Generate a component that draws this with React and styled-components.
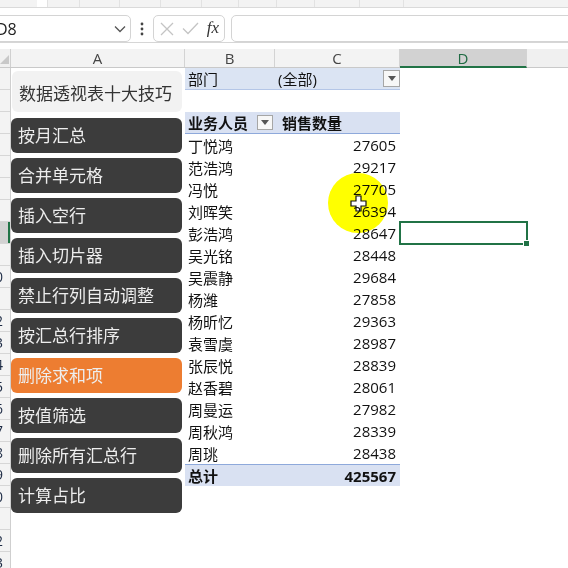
import React from "react";
import styled, { createGlobalStyle } from "styled-components";

const tips = [
  "按月汇总",
  "合并单元格",
  "插入空行",
  "插入切片器",
  "禁止行列自动调整",
  "按汇总行排序",
  "删除求和项",
  "按值筛选",
  "删除所有汇总行",
  "计算占比",
];
const activeTip = "删除求和项";

const sales = [
  ["丁悦鸿", 27605],
  ["范浩鸿", 29217],
  ["冯悦", 27705],
  ["刘晖笑", 26394],
  ["彭浩鸿", 28647],
  ["吴光铭", 28448],
  ["吴震静", 29684],
  ["杨潍", 27858],
  ["杨昕忆", 29363],
  ["袁雪虞", 28987],
  ["张辰悦", 28839],
  ["赵香碧", 28061],
  ["周曼运", 27982],
  ["周秋鸿", 28339],
  ["周珧", 28438],
];
const total = sales.reduce((s, r) => s + r[1], 0);

const ROWS = 23;
const SELECTED_ROW = 8;
const rowNums = Array.from({ length: ROWS }, (_, i) => i + 1);

const columns = [
  { key: "A", width: 174 },
  { key: "B", width: 90 },
  { key: "C", width: 125 },
  { key: "D", width: 127, selected: true },
];

function Dropdown({ small }) {
  return (
    <DropBtn $small={small}>
      <svg width="8" height="5" viewBox="0 0 8 5">
        <path d="M0 0h8L4 5z" fill="#555" />
      </svg>
    </DropBtn>
  );
}

function FormulaArea() {
  return (
    <FormulaBar>
      <NameBox>
        <span>D8</span>
        <svg width="12" height="8" viewBox="0 0 12 8">
          <path d="M1 1.5l5 5 5-5" fill="none" stroke="#555" strokeWidth="1.3" />
        </svg>
      </NameBox>
      <Dots>
        <svg width="4" height="14" viewBox="0 0 4 14">
          <circle cx="2" cy="2" r="1.4" fill="#444" />
          <circle cx="2" cy="7" r="1.4" fill="#444" />
          <circle cx="2" cy="12" r="1.4" fill="#444" />
        </svg>
      </Dots>
      <FxBox>
        <svg width="14" height="14" viewBox="0 0 14 14">
          <path d="M1 1l12 12M13 1L1 13" stroke="#c4c4c4" strokeWidth="1.3" />
        </svg>
        <svg width="17" height="13" viewBox="0 0 17 13">
          <path d="M1 6.5l5 5L16 1" fill="none" stroke="#c4c4c4" strokeWidth="1.3" />
        </svg>
        <Fx>fx</Fx>
      </FxBox>
      <FormulaInput />
    </FormulaBar>
  );
}

function ColumnHeaders() {
  return (
    <HeaderRow>
      <Corner>
        <svg width="9" height="9" viewBox="0 0 9 9">
          <path d="M9 0v9H0z" fill="#c8c8c8" />
        </svg>
      </Corner>
      {columns.map((c) => (
        <ColHeader key={c.key} $w={c.width} $selected={c.selected}>
          {c.key}
        </ColHeader>
      ))}
      <ColHeaderRest />
    </HeaderRow>
  );
}

function Pivot() {
  return (
    <PivotCol>
      <FilterRow>
        <LabelCell>部门</LabelCell>
        <ValueCell>
          (全部)
          <Dropdown />
        </ValueCell>
      </FilterRow>
      <PivotRow />
      <HeadRow>
        <LabelCell>
          业务人员
          <Dropdown small />
        </LabelCell>
        <ValueCell $pad={7}>销售数量</ValueCell>
      </HeadRow>
      {sales.map(([name, n]) => (
        <PivotRow key={name}>
          <LabelCell>{name}</LabelCell>
          <NumCell>{n}</NumCell>
        </PivotRow>
      ))}
      <TotalRow>
        <LabelCell>总计</LabelCell>
        <NumCell>{total}</NumCell>
      </TotalRow>
    </PivotCol>
  );
}

export default function App() {
  return (
    <Page>
      <GlobalStyle />
      <TopStrip>
        <RibbonTab $w={10} $white />
        <RibbonTab $w={31} />
        <RibbonTab $w={39} />
        <RibbonTab $w={40} />
        <RibbonTab $w={40} />
        <RibbonTab $w={36} />
        <RibbonTab $w={37} />
        <RibbonTab $w={37} />
        <RibbonTab $w={44} />
        <RibbonTab $w={43} />
      </TopStrip>
      <FormulaArea />
      <ColumnHeaders />
      <Body>
        <RowHeaderCol>
          {rowNums.map((n) => (
            <RowHead key={n} $selected={n === SELECTED_ROW}>
              <RowNum>{n}</RowNum>
            </RowHead>
          ))}
        </RowHeaderCol>
        <PanelCol>
          <PanelTitle>数据透视表十大技巧</PanelTitle>
          {tips.map((t) => (
            <TipButton key={t} $active={t === activeTip}>
              {t}
            </TipButton>
          ))}
        </PanelCol>
        <Pivot />
        <DCol>
          {rowNums.map((n) => (
            <DCell key={n} $selected={n === SELECTED_ROW} />
          ))}
        </DCol>
      </Body>
      <Highlight>
        <svg width="17" height="17" viewBox="0 0 17 17">
          <path
            d="M6 1h5v5h5v5h-5v5H6v-5H1V6h5z"
            fill="#fff"
            stroke="#111"
            strokeWidth="1.2"
          />
        </svg>
      </Highlight>
    </Page>
  );
}

const GlobalStyle = createGlobalStyle`
  html, body {
    margin: 0;
    padding: 0;
    background: #fff;
    overflow: hidden;
  }
  body {
    font-family: "Open Sans", "Noto Sans CJK SC", sans-serif;
  }
`;

const Page = styled.div`
  position: relative;
  width: 568px;
  height: 568px;
  overflow: hidden;
  background: #fff;
`;

const TopStrip = styled.div`
  display: flex;
  height: 7px;
  background: #f3f3f3;
  border-bottom: 1px solid #dadada;
  padding-left: 37px;
`;

const RibbonTab = styled.div`
  width: ${(p) => p.$w}px;
  background: ${(p) => (p.$white ? "#fff" : "transparent")};
  border-right: 1px solid #e2e2e2;
`;

const FormulaBar = styled.div`
  display: flex;
  align-items: flex-start;
  height: 35px;
  padding-top: 7px;
  box-sizing: border-box;
  border-bottom: 1px solid #d6d6d6;
  margin-bottom: 6px;
`;

const Box = styled.div`
  height: 27px;
  box-sizing: border-box;
  border: 1px solid #d4d4d4;
  border-radius: 5px;
  background: #fff;
  display: flex;
  align-items: center;
`;

const NameBox = styled(Box)`
  margin-left: -15px;
  width: 146px;
  padding: 0 4px 0 10px;
  justify-content: space-between;
  font-size: 16px;
  color: #222;
`;

const Dots = styled.div`
  width: 22px;
  height: 27px;
  display: flex;
  align-items: center;
  justify-content: center;
`;

const FxBox = styled(Box)`
  width: 72px;
  padding: 0 5px 0 6px;
  justify-content: space-between;
`;

const Fx = styled.span`
  font-family: "Liberation Serif", serif;
  font-style: italic;
  font-size: 17px;
  color: #333;
  padding-bottom: 2px;
`;

const FormulaInput = styled(Box)`
  flex: 1;
  margin-left: 6px;
  margin-right: -10px;
`;

const HeaderRow = styled.div`
  display: flex;
  height: 19px;
  background: #f0f0f0;
  border-bottom: 1px solid #c9c9c9;
  box-sizing: border-box;
`;

const Corner = styled.div`
  width: 11px;
  box-sizing: border-box;
  border-right: 1px solid #d0d0d0;
  display: flex;
  align-items: flex-end;
  justify-content: flex-end;
  padding: 0 1px 3px 0;
`;

const ColHeader = styled.div`
  width: ${(p) => p.$w}px;
  box-sizing: border-box;
  border-right: 1px solid #d3d3d3;
  display: flex;
  align-items: center;
  justify-content: center;
  font-size: 15px;
  color: ${(p) => (p.$selected ? "#1f6b43" : "#444")};
  background: ${(p) => (p.$selected ? "#d2d2d2" : "#f3f3f3")};
  border-bottom: ${(p) => (p.$selected ? "2px solid #217346" : "none")};
  margin-bottom: ${(p) => (p.$selected ? "-1px" : "0")};
`;

const ColHeaderRest = styled.div`
  flex: 1;
  background: #f0f0f0;
`;

const Body = styled.div`
  display: flex;
`;

const RowHeaderCol = styled.div`
  width: 11px;
  flex: none;
  border-right: 1px solid #cfcfcf;
  box-sizing: border-box;
  background: #f3f3f3;
  overflow: hidden;
`;

const RowHead = styled.div`
  height: 22px;
  box-sizing: border-box;
  border-bottom: 1px solid #d6d6d6;
  background: ${(p) => (p.$selected ? "#d2d2d2" : "transparent")};
  box-shadow: ${(p) => (p.$selected ? "inset -2px 0 0 #217346" : "none")};
  display: flex;
  align-items: center;
  overflow: hidden;
`;

const RowNum = styled.span`
  flex: none;
  width: 30px;
  margin-left: -20px;
  text-align: center;
  font-size: 14px;
  color: #1c2a44;
`;

const PanelCol = styled.div`
  width: 174px;
  flex: none;
  display: flex;
  flex-direction: column;
  gap: 5px;
  padding: 3px 3px 0 0;
  box-sizing: border-box;
  font-family: "Noto Sans CJK SC", sans-serif;
`;

const PanelTitle = styled.div`
  height: 41px;
  margin: 0 0 1px 1px;
  box-sizing: border-box;
  padding: 2px 0 0 7px;
  display: flex;
  align-items: center;
  background: #f2f2f2;
  border-radius: 6px;
  font-size: 17px;
  color: #333;
`;

const TipButton = styled.div`
  height: 35px;
  box-sizing: border-box;
  padding: 0 0 2px 7px;
  display: flex;
  align-items: center;
  border-radius: 6px;
  background: ${(p) => (p.$active ? "#ed7d31" : "#3c3c3c")};
  color: #ededed;
  font-size: 17px;
`;

const PivotCol = styled.div`
  width: 215px;
  flex: none;
  font-size: 15px;
  color: #111;
`;

const PivotRow = styled.div`
  display: flex;
  height: 22px;
  box-sizing: border-box;
  align-items: center;
`;

const FilterRow = styled(PivotRow)`
  background: #dbe4f3;
  border-bottom: 1px solid #b4c6e7;
`;

const HeadRow = styled(PivotRow)`
  background: #d9e1f2;
  border-bottom: 1px solid #8ea9db;
  font-weight: 700;
`;

const TotalRow = styled(PivotRow)`
  background: #d9e1f2;
  border-top: 1px solid #8ea9db;
  font-weight: 700;
`;

const LabelCell = styled.div`
  width: 90px;
  flex: none;
  box-sizing: border-box;
  padding: 0 2px 0 3px;
  display: flex;
  align-items: center;
  justify-content: space-between;
`;

const ValueCell = styled.div`
  flex: 1;
  padding-left: ${(p) => p.$pad || 3}px;
  display: flex;
  align-items: center;
  justify-content: space-between;
`;

const NumCell = styled.div`
  flex: 1;
  text-align: right;
  padding-right: 4px;
`;

const DropBtn = styled.div`
  width: ${(p) => (p.$small ? 16 : 17)}px;
  height: ${(p) => (p.$small ? 15 : 17)}px;
  box-sizing: border-box;
  border: 1px solid #a6a6a6;
  background: #f7f7f7;
  display: flex;
  align-items: center;
  justify-content: center;
`;

const DCol = styled.div`
  width: 127px;
  flex: none;
`;

const DCell = styled.div`
  position: relative;
  height: 22px;
  box-sizing: border-box;
  outline: ${(p) => (p.$selected ? "2px solid #217346" : "none")};
  outline-offset: -1px;

  &::after {
    content: "";
    display: ${(p) => (p.$selected ? "block" : "none")};
    position: absolute;
    right: -3px;
    bottom: -3px;
    width: 5px;
    height: 5px;
    background: #217346;
    border: 1px solid #fff;
  }
`;

const Highlight = styled.div`
  position: absolute;
  left: 328px;
  top: 173px;
  width: 60px;
  height: 60px;
  border-radius: 50%;
  background: #ffff00;
  mix-blend-mode: multiply;
  display: flex;
  align-items: center;
  justify-content: center;
  padding: 0 0 0 1px;
  box-sizing: border-box;

  svg {
    mix-blend-mode: normal;
  }
`;
